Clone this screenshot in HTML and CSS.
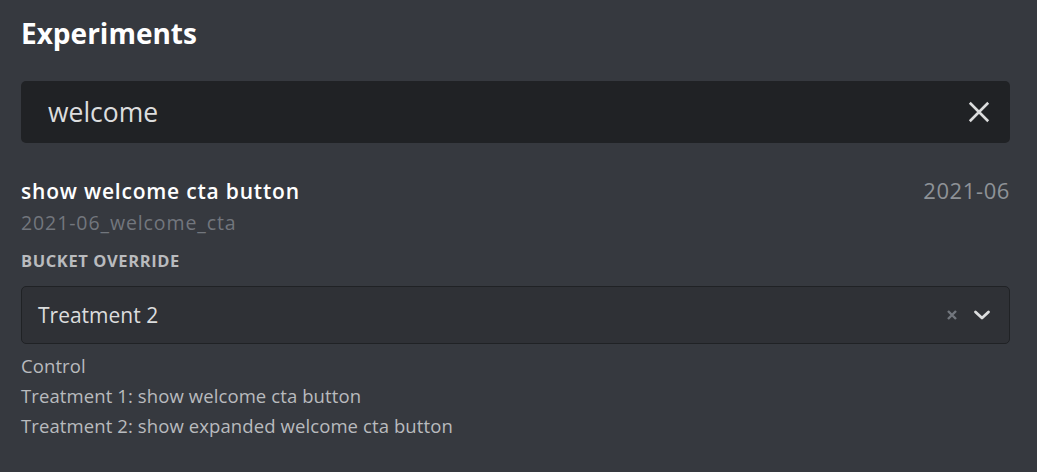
FILE: index.html
```html
<!DOCTYPE html>
<html>
<head>
<meta charset="utf-8">
<link rel="stylesheet" href="styles.css">
</head>
<body>
<div class="page">
  <h1 class="heading">Experiments</h1>
  <div class="search">
    <span class="search-text">welcome</span>
    <svg class="search-clear" width="26" height="26" viewBox="0 0 24 24"><path d="M3.5 3.5L20.5 20.5M20.5 3.5L3.5 20.5" stroke="#dcddde" stroke-width="2.4" fill="none"/></svg>
  </div>
  <div class="exp">
    <div class="exp-head">
      <div class="exp-title">show welcome cta button</div>
      <div class="exp-date">2021-06</div>
    </div>
    <div class="exp-id">2021-06_welcome_cta</div>
    <div class="label">Bucket Override</div>
    <div class="select">
      <span class="select-value">Treatment 2</span>
      <span class="select-icons">
        <svg width="12" height="12" viewBox="0 0 12 12"><path d="M2 2L10 10M10 2L2 10" stroke="#72767d" stroke-width="2.4" fill="none"/></svg>
        <svg width="20" height="20" viewBox="0 0 20 20"><path d="M3.5 7L10 13L16.5 7" stroke="#dcddde" stroke-width="2.8" fill="none" stroke-linecap="round" stroke-linejoin="round"/></svg>
      </span>
    </div>
    <div class="options">
      <div>Control</div>
      <div>Treatment 1: show welcome cta button</div>
      <div>Treatment 2: show expanded welcome cta button</div>
    </div>
  </div>
</div>
</body>
</html>
```
FILE: styles.css
```css
html, body {
  margin: 0;
  background: #36393f;
  height: 100%;
}
body {
  font-family: "Open Sans", "Noto Sans", sans-serif;
  color: #dcddde;
}
.page {
  padding: 12px 27px 0 21px;
}
.heading {
  margin: 0;
  font-size: 28px;
  font-weight: 700;
  color: #ffffff;
  line-height: 42px;
}
.search {
  margin-top: 27px;
  height: 62px;
  background: #202225;
  border-radius: 5px;
  display: flex;
  align-items: center;
  justify-content: space-between;
  padding: 0 18px 0 27px;
}
.search-text {
  font-size: 26.5px;
  color: #dcddde;
}
.search-clear {
  display: block;
}
.exp {
  margin-top: 32px;
}
.exp-head {
  display: flex;
  justify-content: space-between;
  align-items: baseline;
}
.exp-title {
  font-size: 21px;
  font-weight: 600;
  color: #ffffff;
  line-height: 28px;
  letter-spacing: 0.8px;
}
.exp-date {
  font-size: 22px;
  color: #8e9297;
  letter-spacing: 0.6px;
}
.exp-id {
  font-size: 19.5px;
  color: #72767d;
  line-height: 28px;
  margin-top: 4px;
  letter-spacing: 0.9px;
}
.label {
  margin-top: 14px;
  font-size: 16.5px;
  font-weight: 700;
  text-transform: uppercase;
  color: #b9bbbe;
  letter-spacing: 0.6px;
  line-height: 20px;
}
.select {
  margin-top: 15px;
  height: 56px;
  background: #2f3136;
  border: 1px solid #202225;
  border-radius: 5px;
  display: flex;
  align-items: center;
  justify-content: space-between;
  padding: 0 17px 0 16px;
}
.select-value {
  font-size: 21px;
  color: #dcddde;
}
.select-icons {
  display: flex;
  align-items: center;
  gap: 14px;
}
.select-icons svg {
  display: block;
}
.options {
  margin-top: 7px;
  font-size: 18.5px;
  line-height: 30px;
  color: #b9bbbe;
  letter-spacing: 0.1px;
}
```
